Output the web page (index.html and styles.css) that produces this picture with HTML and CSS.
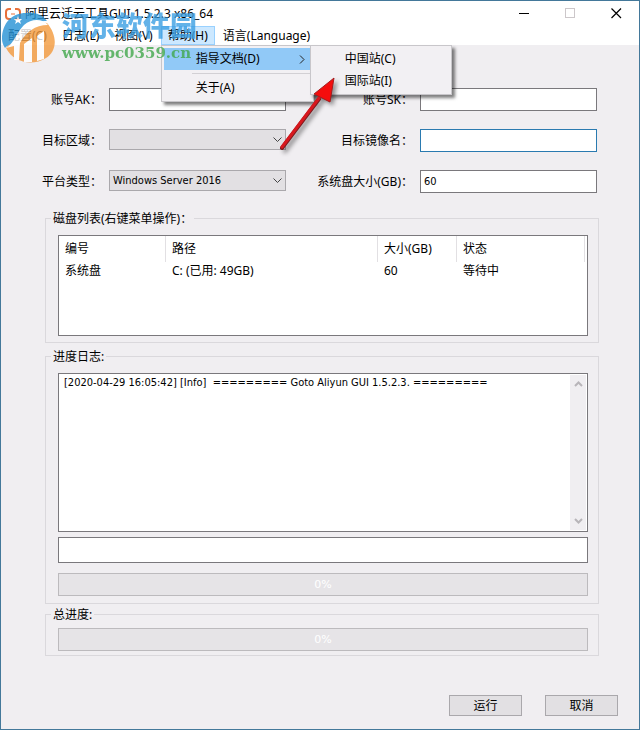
FILE: index.html
```
<!DOCTYPE html>
<html lang="zh-CN">
<head>
    <meta charset="UTF-8">
    <meta name="viewport" content="width=device-width, initial-scale=1.0">
    <title>阿里云迁云工具GUI 1.5.2.3 x86_64</title>
    <link rel="stylesheet" href="styles.css">
</head>
<body>
    <div class="window">
        <header class="titlebar">
            <svg class="app-icon" width="16" height="12" viewBox="0 0 16 12" fill="none" stroke="#e8703a" stroke-width="2">
                <path d="M6 1H4Q1 1 1 4V8Q1 11 4 11H6M10 1H12Q15 1 15 4V8Q15 11 12 11H10" />
                <path d="M6 6H10" stroke-width="1" />
            </svg>
            <h1 class="title">阿里云迁云工具GUI 1.5.2.3 x86_64</h1>
            <div class="window-buttons">
                <button type="button" aria-label="最小化"><svg width="11" height="11" viewBox="0 0 11 11"><path d="M0 5.500H10" stroke="#000" /></svg></button>
                <button type="button" aria-label="最大化" disabled><svg width="11" height="11" viewBox="0 0 11 11"><rect x="0.500" y="0.500" width="9" height="9" fill="none" stroke="#ccc7ca" /></svg></button>
                <button type="button" aria-label="关闭"><svg width="11" height="11" viewBox="0 0 11 11"><path d="M0.500 0.500L10 10M10 0.500L0.500 10" stroke="#000" stroke-width="1.200" /></svg></button>
            </div>
        </header>

        <nav class="menubar">
            <button type="button">配置(C)</button>
            <button type="button">日志(L)</button>
            <button type="button">视图(V)</button>
            <div class="menu-item">
                <button type="button" class="active">帮助(H)</button>
                <div class="menu">
                    <div class="menu-row">
                        <button type="button" class="selected">指导文档(D)
                            <svg width="6" height="9" viewBox="0 0 6 9"><path d="M1 0.500L5 4.500L1 8.500" fill="none" stroke="#222" /></svg>
                        </button>
                        <div class="submenu">
                            <button type="button">中国站(C)</button>
                            <button type="button">国际站(I)</button>
                        </div>
                    </div>
                    <hr>
                    <button type="button">关于(A)</button>
                </div>
            </div>
            <button type="button">语言(Language)</button>
        </nav>

        <main class="content">
            <div class="form-grid">
                <label for="ak">账号AK：</label>
                <input type="text" id="ak">
                <label for="sk">账号SK：</label>
                <input type="text" id="sk">

                <label for="region">目标区域：</label>
                <div class="select-box">
                    <select id="region"><option></option></select>
                    <svg width="9" height="6" viewBox="0 0 9 6"><path d="M0.500 0.500L4.500 4.500L8.500 0.500" fill="none" stroke="#444" /></svg>
                </div>
                <label for="image">目标镜像名：</label>
                <input type="text" id="image" class="focused">

                <label for="platform">平台类型：</label>
                <div class="select-box">
                    <select id="platform"><option>Windows Server 2016</option></select>
                    <svg width="9" height="6" viewBox="0 0 9 6"><path d="M0.500 0.500L4.500 4.500L8.500 0.500" fill="none" stroke="#444" /></svg>
                </div>
                <label for="disk">系统盘大小(GB)：</label>
                <input type="text" id="disk" value="60">
            </div>

            <fieldset class="group disks">
                <legend>磁盘列表(右键菜单操作)：</legend>
                <div class="disk-list">
                    <table>
                        <thead>
                            <tr><th class="col-id">编号</th><th>路径</th><th class="col-size">大小(GB)</th><th class="col-state">状态</th></tr>
                        </thead>
                        <tbody>
                            <tr><td>系统盘</td><td>C: (已用: 49GB)</td><td>60</td><td>等待中</td></tr>
                        </tbody>
                    </table>
                </div>
            </fieldset>

            <fieldset class="group logs">
                <legend>进度日志:</legend>
                <div class="log-box">
                    <textarea readonly aria-label="进度日志">[2020-04-29 16:05:42] [Info]  ========= Goto Aliyun GUI 1.5.2.3. =========</textarea>
                    <div class="scrollbar">
                        <svg width="9" height="6" viewBox="0 0 9 6"><path d="M1 5L4.500 1.500L8 5" fill="none" stroke="#b8b5b9" stroke-width="2" /></svg>
                        <svg width="9" height="6" viewBox="0 0 9 6"><path d="M1 1L4.500 4.500L8 1" fill="none" stroke="#b8b5b9" stroke-width="2" /></svg>
                    </div>
                </div>
                <input type="text" class="status-line" aria-label="当前状态">
                <div class="progress-box">
                    <progress value="0" max="100" aria-label="当前进度"></progress>
                    <span>0%</span>
                </div>
            </fieldset>

            <fieldset class="group total">
                <legend>总进度:</legend>
                <div class="progress-box">
                    <progress value="0" max="100" aria-label="总进度"></progress>
                    <span>0%</span>
                </div>
            </fieldset>

            <div class="actions">
                <button type="button">运行</button>
                <button type="button">取消</button>
            </div>
        </main>

        <!-- site watermark -->
        <div class="watermark">
            <svg width="56" height="54" viewBox="0 0 56 54">
                <path d="M1 30C1 14 11 4 25 4C33 3 41 5 46 12C33 11 21 19 13 38C10 36 7 35 4 39C2 36 1 33 1 30Z" fill="#2592d5" />
                <path d="M46 14C57 27 56 42 45 49C31 58 12 53 5 39C8 35 11 34 14 36C22 19 33 12 46 14Z" fill="#f39a3d" />
                <path d="M5 39C12 36 15 24 23 16C31 9 42 10 47 16C34 16 25 23 19 34L18 51H13V37Z" fill="#fff" />
                <path d="M23 35L31 29V53H23ZM36 27L43 22V50L36 52Z" fill="#fff" />
                <path d="M17 7L18 10L21 10L19 12L20 15L17 13L14 15L15 12L13 10L16 10Z" fill="#fff" />
            </svg>
            <div class="watermark-text">
                <strong>河东软件园</strong>
                <span>www.pc0359.cn</span>
            </div>
        </div>

        <!-- red pointer to the submenu -->
        <svg class="arrow" width="60" height="80" viewBox="0 0 60 80">
            <path d="M3 75L40 26" stroke="#7d1c20" stroke-width="4" stroke-linecap="round" />
            <path d="M3 74L40 25" stroke="#d8181e" stroke-width="3" stroke-linecap="round" />
            <path d="M55 5L51 29L43 25L35 21Z" fill="#f40d0d" stroke="#a31a1c" />
        </svg>
    </div>
</body>
</html>
```
FILE: styles.css
```
* {
    box-sizing: border-box;
}

body {
    margin: 0;
    background: #f0eef1;
    color: #000;
    font-family: "Noto Sans", "Noto Sans CJK SC", sans-serif;
    font-size: 12px;
    line-height: 16px;
}

button, input, select, textarea {
    margin: 0;
    font: inherit;
    color: inherit;
    border-radius: 0;
}

.window {
    position: relative;
    min-height: 100vh;
    border: 1px solid #43789a;
    background: #f0eef1;
}

.titlebar {
    display: flex;
    align-items: center;
    height: 25px;
    padding-left: 4px;
    background: #fff;
}

.title {
    flex: 1;
    margin: 0 0 0 4px;
    font-size: 12px;
    font-weight: normal;
}

.window-buttons {
    display: flex;
}

.window-buttons button {
    display: flex;
    align-items: center;
    justify-content: center;
    width: 46px;
    height: 24px;
    padding: 0;
    border: none;
    background: none;
}

/* menus */
.menubar {
    display: flex;
    gap: 1px;
    height: 19px;
    background: #fff;
}

.menubar button {
    display: block;
    padding: 0 6px;
    border: 1px solid transparent;
    background: none;
    white-space: nowrap;
}

.menubar button.active {
    height: 19px;
    background: #cce8ff;
    border-color: #99d1ff;
}

.menu-item {
    position: relative;
}

.menu, .submenu {
    position: absolute;
    z-index: 2;
    background: #f2f0f3;
    border: 1px solid #c8c6ca;
    box-shadow: 3px 3px 3px rgba(0, 0, 0, 0.5);
}

.menu {
    top: 100%;
    left: 0;
    width: 153px;
    padding: 2px;
}

.menu button {
    display: flex;
    align-items: center;
    justify-content: space-between;
    width: 100%;
    height: 22px;
    padding: 0 5px 0 31px;
}

.menubar .menu button.selected {
    background: #91c9f7;
}

.menu-row {
    position: relative;
}

.menu hr {
    height: 1px;
    margin: 3px 0 3px 28px;
    border: none;
    background: #d2d0d4;
}

.submenu {
    top: -3px;
    left: 146px;
    width: 142px;
    padding: 2px;
}

.content {
    padding: 43px 20px 12px 19px;
}

.form-grid {
    display: grid;
    grid-template-columns: 82px 1fr 120px 1fr;
    column-gap: 7px;
    row-gap: 18px;
    margin: 0 22px 16px 0;
}

.form-grid label {
    line-height: 23px;
    text-align: right;
    white-space: nowrap;
}

input[type="text"], select, textarea {
    font-family: "DejaVu Sans Condensed", "Noto Sans CJK SC", sans-serif;
    font-size: 11px;
}

input[type="text"] {
    width: 100%;
    height: 23px;
    padding: 0 3px;
    border: 1px solid #7a787c;
    background: #fff;
    outline: none;
}

input.focused {
    border-color: #2a7ab0;
}

.select-box {
    position: relative;
}

.select-box select {
    display: block;
    width: 100%;
    height: 21px;
    padding: 0 20px 0 3px;
    appearance: none;
    border: 1px solid #aaa8ac;
    background: #e2e0e3;
}

.select-box svg {
    position: absolute;
    top: 8px;
    right: 4px;
}

/* group boxes */
.group {
    min-width: 0;
    margin: 0 20px 0 25px;
    border: 1px solid #dad8dc;
}

.group legend {
    margin-left: -7px;
    padding: 2px 2px 0;
}

.disks {
    margin-bottom: 4px;
    padding: 8px 10px 6px 12px;
}

.logs {
    margin-bottom: 1px;
    padding: 8px 10px 7px 12px;
}

.total {
    padding: 5px 10px 4px 12px;
}

.disk-list {
    height: 101px;
    padding-right: 2px;
    border: 1px solid #7a787c;
    background: #fff;
}

table {
    width: 100%;
    table-layout: fixed;
    border-collapse: separate;
    border-spacing: 0;
}

th, td {
    height: 18px;
    padding: 0 6px;
    text-align: left;
    font-weight: normal;
    white-space: nowrap;
}

th {
    height: 26px;
    border-right: 1px solid #e2e0e3;
}

.col-id {
    width: 107px;
}

.col-size {
    width: 79px;
}

.col-state {
    width: 128px;
}

.log-box {
    display: flex;
    height: 159px;
    padding: 1px;
    border: 1px solid #7a787c;
    background: #fff;
}

.log-box textarea {
    flex: 1;
    padding: 0 4px;
    border: none;
    outline: none;
    resize: none;
    overflow: hidden;
}

.scrollbar {
    display: flex;
    flex-direction: column;
    align-items: center;
    justify-content: space-between;
    width: 16px;
    padding: 6px 0;
    background: #f0eef1;
}

.group .status-line {
    display: block;
    height: 26px;
    margin: 5px 0 10px;
}

.progress-box {
    display: grid;
    height: 23px;
}

.progress-box > * {
    grid-area: 1 / 1;
}

.progress-box progress {
    width: 100%;
    height: 23px;
    appearance: none;
    border: 1px solid #bcbabd;
    background: #e6e4e7;
}

.progress-box progress::-webkit-progress-bar {
    background: #e6e4e7;
}

.progress-box span {
    place-self: center;
    color: #fff;
    z-index: 1;
    font-family: "DejaVu Sans", sans-serif;
    font-size: 11px;
}

.actions {
    display: flex;
    justify-content: flex-end;
    gap: 23px;
    margin: 39px 1px 0 0;
}

.actions button {
    width: 73px;
    height: 21px;
    padding: 0;
    border: 1px solid #aaa8ac;
    background: #e2e0e3;
}

.watermark {
    position: absolute;
    top: 8px;
    left: 0;
    z-index: 4;
    display: flex;
    gap: 5px;
    opacity: 0.8;
    pointer-events: none;
}

.watermark-text {
    display: flex;
    flex-direction: column;
}

.watermark-text strong {
    color: #3b9fe3;
    font-size: 27px;
    font-weight: 900;
    line-height: 34px;
}

.watermark-text span {
    color: #42a84c;
    font-family: "DejaVu Serif", serif;
    font-size: 15px;
    font-weight: bold;
    line-height: 20px;
}

.arrow {
    position: absolute;
    top: 72px;
    left: 278px;
    z-index: 5;
    filter: drop-shadow(3px 3px 2px rgba(0, 0, 0, 0.4));
    pointer-events: none;
}
```
